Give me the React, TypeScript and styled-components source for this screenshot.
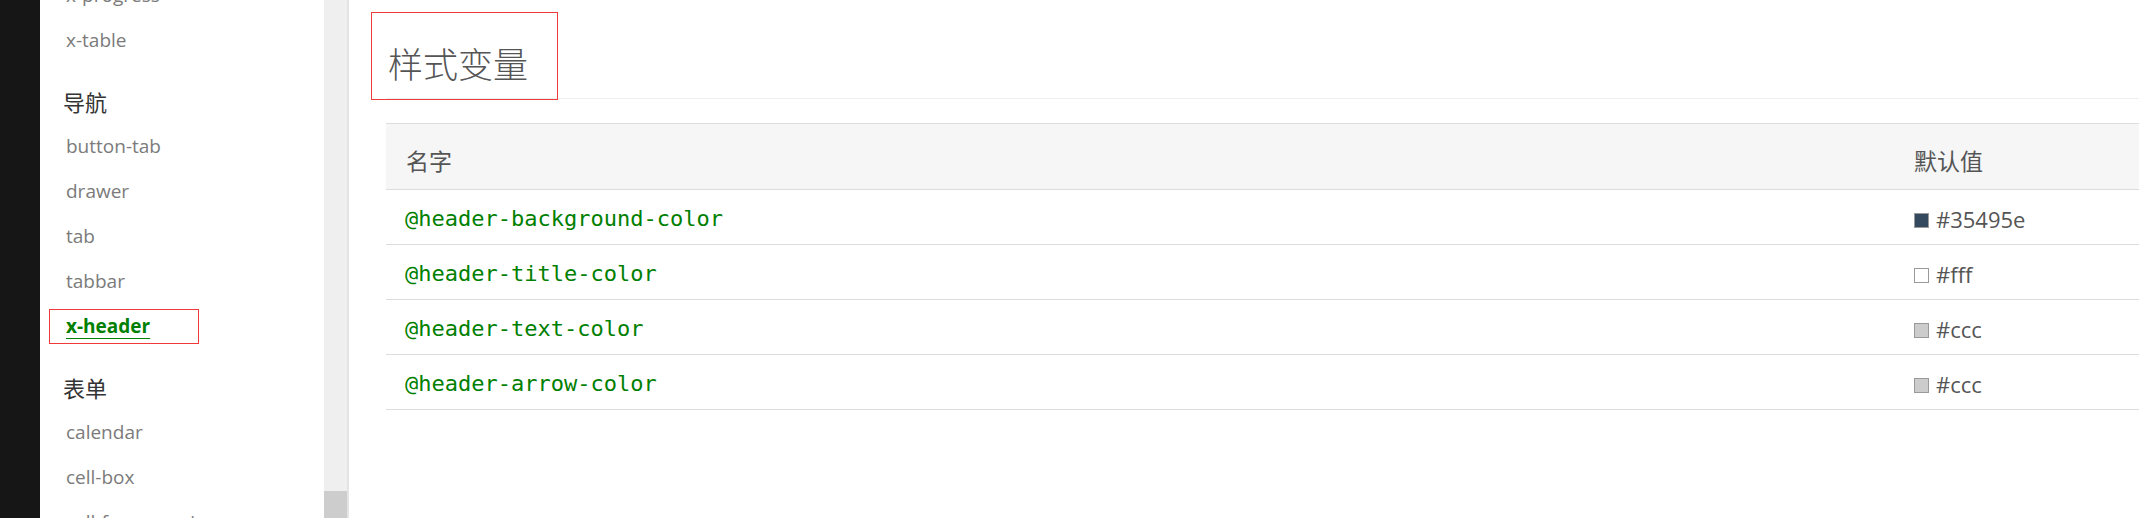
import React from "react";
import styled, { createGlobalStyle } from "styled-components";

const GlobalStyle = createGlobalStyle`
  html, body {
    margin: 0;
    padding: 0;
    height: 518px;
    overflow: hidden;
    background: #fff;
  }
  #root {
    height: 100%;
  }
`;

const Page = styled.div`
  display: flex;
  height: 518px;
  font-family: "Open Sans", "Noto Sans CJK SC", sans-serif;
`;

const DarkStrip = styled.div`
  width: 40px;
  flex-shrink: 0;
  background: #161616;
`;

const Sidebar = styled.nav`
  width: 284px;
  flex-shrink: 0;
  overflow: hidden;
  background: #fff;
`;

const NavList = styled.div`
  display: flex;
  flex-direction: column;
  margin-top: -28px;
`;

const NavGroup = styled.div`
  height: 45px;
  margin-top: 16px;
  padding-left: 23px;
  display: flex;
  align-items: center;
  font-family: "Noto Sans CJK SC", sans-serif;
  font-size: 22px;
  color: #333;
`;

const NavItem = styled.a<{ active?: boolean }>`
  position: relative;
  height: 45px;
  padding-left: 26px;
  display: flex;
  align-items: center;
  font-size: 19px;
  text-decoration: none;
  color: ${({ active }) => (active ? "#008000" : "#7b7b7b")};
  font-weight: ${({ active }) => (active ? 700 : 400)};

  span {
    text-decoration: ${({ active }) => (active ? "underline" : "none")};
    text-decoration-thickness: 1px;
    text-underline-offset: 5px;
  }
`;

const Highlight = styled.div<{ left: number; top: number; w: number; h: number }>`
  position: absolute;
  left: ${({ left }) => left}px;
  top: ${({ top }) => top}px;
  width: ${({ w }) => w}px;
  height: ${({ h }) => h}px;
  border: 1px solid #f03a3a;
  box-sizing: border-box;
  pointer-events: none;
`;

const ScrollTrack = styled.div`
  width: 23px;
  flex-shrink: 0;
  background: #efefef;
  border-right: 2px solid #e4e4e4;
  display: flex;
  flex-direction: column;
  justify-content: flex-end;
`;

const ScrollThumb = styled.div`
  height: 27px;
  background: #cdcdcd;
`;

const Main = styled.main`
  flex: 1;
  min-width: 0;
  padding-left: 37px;
  background: #fff;
`;

const Title = styled.h2`
  position: relative;
  margin: 0;
  padding: 40px 0 12px 2px;
  line-height: 46px;
  font-family: "Noto Sans CJK SC", serif;
  font-size: 35px;
  font-weight: 300;
  color: #555;
  border-bottom: 1px solid #eee;
`;

const Table = styled.div`
  margin-top: 24px;
  border-top: 1px solid #ddd;
`;

const Row = styled.div<{ head?: boolean }>`
  display: grid;
  grid-template-columns: 1fr 245px;
  height: ${({ head }) => (head ? 65 : 54)}px;
  align-items: center;
  background: ${({ head }) => (head ? "#f6f6f6" : "#fff")};
  border-bottom: 1px solid #ddd;
`;

const HeadCell = styled.div`
  padding-left: 20px;
  font-family: "Noto Sans CJK SC", sans-serif;
  font-size: 23px;
  color: #555;
  padding-top: 6px;
`;

const VarName = styled.code`
  padding-left: 19px;
  font-family: "DejaVu Sans Mono", "Liberation Mono", monospace;
  font-size: 22px;
  color: #008000;
  padding-top: 3px;
`;

const ValueCell = styled.div`
  padding-left: 20px;
  display: flex;
  align-items: center;
  gap: 7px;
  font-size: 22px;
  color: #555;
  padding-top: 4px;
`;

const Swatch = styled.span<{ color: string }>`
  width: 15px;
  height: 15px;
  box-sizing: border-box;
  border: 1px solid #9a9a9a;
  background: ${({ color }) => color};
  margin-top: 2px;
`;

type NavEntry = { kind: "group" | "item"; label: string; active?: boolean };

const nav: NavEntry[] = [
  { kind: "item", label: "x-progress" },
  { kind: "item", label: "x-table" },
  { kind: "group", label: "导航" },
  { kind: "item", label: "button-tab" },
  { kind: "item", label: "drawer" },
  { kind: "item", label: "tab" },
  { kind: "item", label: "tabbar" },
  { kind: "item", label: "x-header", active: true },
  { kind: "group", label: "表单" },
  { kind: "item", label: "calendar" },
  { kind: "item", label: "cell-box" },
  { kind: "item", label: "cell-form-preview" },
];

const vars = [
  { name: "@header-background-color", value: "#35495e" },
  { name: "@header-title-color", value: "#fff" },
  { name: "@header-text-color", value: "#ccc" },
  { name: "@header-arrow-color", value: "#ccc" },
];

export default function App() {
  return (
    <>
      <GlobalStyle />
      <Page>
        <DarkStrip />
        <Sidebar>
          <NavList>
            {nav.map((entry) =>
              entry.kind === "group" ? (
                <NavGroup key={entry.label}>{entry.label}</NavGroup>
              ) : (
                <NavItem key={entry.label} active={entry.active}>
                  <span>{entry.label}</span>
                  {entry.active && <Highlight left={9} top={6} w={150} h={35} />}
                </NavItem>
              )
            )}
          </NavList>
        </Sidebar>
        <ScrollTrack>
          <ScrollThumb />
        </ScrollTrack>
        <Main>
          <Title>
            样式变量
            <Highlight left={-15} top={12} w={187} h={88} />
          </Title>
          <Table>
            <Row head>
              <HeadCell>名字</HeadCell>
              <HeadCell>默认值</HeadCell>
            </Row>
            {vars.map((v) => (
              <Row key={v.name}>
                <VarName>{v.name}</VarName>
                <ValueCell>
                  <Swatch color={v.value} />
                  {v.value}
                </ValueCell>
              </Row>
            ))}
          </Table>
        </Main>
      </Page>
    </>
  );
}
